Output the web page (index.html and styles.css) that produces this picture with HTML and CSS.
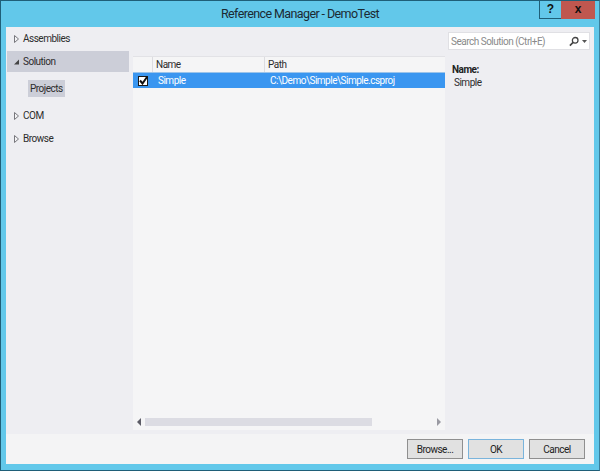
FILE: index.html
```html
<!DOCTYPE html>
<html lang="en">
<head>
<meta charset="utf-8">
<title>Reference Manager - DemoTest</title>
<link rel="stylesheet" href="styles.css">
</head>
<body>
<div class="window">
  <header class="titlebar">
    <h1 class="title">Reference Manager - DemoTest</h1>
    <div class="controls">
      <div class="ctl help">?</div>
      <div class="ctl close">x</div>
    </div>
  </header>
  <div class="client">
    <div class="content">
      <nav class="nav">
        <div class="nav-item"><svg class="arrow" width="5" height="8" viewBox="0 0 5 8"><path d="M.5.5v7L4.500 4z" fill="#f4f4f6" stroke="#77777d"/></svg><span>Assemblies</span></div>
        <div class="nav-item active"><svg class="arrow" width="5" height="8" viewBox="0 0 5 8"><path d="M0 6.500h5V1.500z" fill="#444"/></svg><span>Solution</span></div>
        <div class="sub"><span class="sub-item">Projects</span></div>
        <div class="nav-item"><svg class="arrow" width="5" height="8" viewBox="0 0 5 8"><path d="M.5.5v7L4.500 4z" fill="#f4f4f6" stroke="#77777d"/></svg><span>COM</span></div>
        <div class="nav-item"><svg class="arrow" width="5" height="8" viewBox="0 0 5 8"><path d="M.5.5v7L4.500 4z" fill="#f4f4f6" stroke="#77777d"/></svg><span>Browse</span></div>
      </nav>
      <main class="center">
        <div class="list">
          <div class="head">
            <div class="col-check"></div>
            <div class="col-name">Name</div>
            <div class="col-path">Path</div>
          </div>
          <div class="row">
            <div class="col-check"><span class="checkbox"><svg width="9" height="9" viewBox="0 0 9 9"><path d="M1 4.500l2.500 3L8 1" fill="none" stroke="#111" stroke-width="2"/></svg></span></div>
            <div class="col-name row-name">Simple</div>
            <div class="col-path row-path">C:\Demo\Simple\Simple.csproj</div>
          </div>
          <div class="list-fill"></div>
          <div class="hscroll">
            <svg width="4" height="8" viewBox="0 0 4 8"><path d="M4 0v8L0 4z" fill="#5c5c66"/></svg>
            <div class="track"><div class="thumb"></div></div>
            <svg width="4" height="8" viewBox="0 0 4 8"><path d="M0 0v8l4-4z" fill="#9a9aa2"/></svg>
          </div>
        </div>
      </main>
      <aside class="side">
        <div class="search">
          <span class="search-text">Search Solution (Ctrl+E)</span>
          <svg class="lens" width="10" height="11" viewBox="0 0 11 11"><circle cx="6.800" cy="4.200" r="3.100" fill="none" stroke="#444" stroke-width="1.400"/><path d="M4.500 6.500L1 10" stroke="#444" stroke-width="1.800"/></svg>
          <svg class="caret" width="5" height="3" viewBox="0 0 5 3"><path d="M0 0h5L2.500 3z" fill="#555"/></svg>
        </div>
        <div class="detail-label">Name:</div>
        <div class="detail-value">Simple</div>
      </aside>
    </div>
    <footer class="footer">
      <button class="btn">Browse...</button>
      <button class="btn default">OK</button>
      <button class="btn">Cancel</button>
    </footer>
  </div>
</div>
</body>
</html>
```
FILE: styles.css
```css
* { box-sizing: border-box; }
html, body { margin: 0; padding: 0; }
body {
  width: 600px;
  height: 471px;
  overflow: hidden;
  background: #fff;
  font-family: Roboto, "Liberation Sans", sans-serif;
  font-size: 10px;
  letter-spacing: -0.5px;
  color: #2c2c2c;
}
.window {
  width: 600px;
  height: 471px;
  display: flex;
  flex-direction: column;
  background: #62c8ea;
  border: 1px solid #1f5f78;
  border-right-color: #3a7f9c;
}
.titlebar {
  height: 26px;
  flex: none;
  display: flex;
  justify-content: center;
  position: relative;
  background: #62c8ea;
}
.title {
  margin: 0;
  font-size: 12.5px;
  font-weight: 400;
  letter-spacing: -0.6px;
  line-height: 26px;
  color: #1b2a33;
}
.controls {
  position: absolute;
  top: -1px;
  right: 4px;
  display: flex;
}
.ctl {
  height: 19px;
  display: flex;
  align-items: center;
  justify-content: center;
  font-family: "Liberation Sans", sans-serif;
  font-weight: 700;
  font-size: 12px;
  letter-spacing: 0;
  color: #111;
  padding-bottom: 2px;
}
.help {
  width: 22px;
  border: 1px solid #1f5f78;
  border-right: 0;
}
.close {
  width: 34px;
  background: #c0574f;
  border-top: 1px solid #1f5f78;
}
.client {
  flex: 1;
  margin: 0 5px 6px 5px;
  display: flex;
  flex-direction: column;
  background: #f4f4f5;
  min-height: 0;
}
.content {
  flex: 1;
  display: flex;
  min-height: 0;
  background: #eeeef2;
}
.nav {
  width: 127px;
  flex: none;
  padding: 0 4px 0 1px;
  display: flex;
  flex-direction: column;
}
.nav-item {
  height: 23px;
  display: flex;
  align-items: center;
  gap: 4px;
  padding-left: 7px;
}
.nav-item span { line-height: 20px; }
.active { height: 21px; margin: 1px 0; background: #ccced8; }
.arrow { flex: none; }
.sub {
  height: 31px;
  padding: 7px 0 0 21px;
}
.sub-item {
  display: inline-block;
  height: 17px;
  line-height: 17px;
  padding: 0 2px;
  background: #ccced8;
}
.center {
  width: 312px;
  flex: none;
  padding-top: 29px;
  display: flex;
}
.list {
  flex: 1;
  margin-bottom: 4px;
  background: #f5f5f6;
  border-top: 1px solid #e2e2e6;
  display: flex;
  flex-direction: column;
}
.head {
  height: 16px;
  display: flex;
  line-height: 15px;
  border-bottom: 1px solid #9cc4ea;
}
.head .col-check, .head .col-name { border-right: 1px solid #dcdce0; }
.col-check { width: 20px; flex: none; }
.col-name { width: 112px; flex: none; padding-left: 3px; }
.col-path { flex: 1; padding-left: 3px; }
.row {
  height: 15px;
  display: flex;
  align-items: center;
  background: #3a96f0;
  color: #fff;
  line-height: 15px;
}
.row .col-check { display: flex; justify-content: center; }
.row-name, .row-path { padding-left: 5px; }
.checkbox {
  width: 10px;
  height: 10px;
  background: #fff;
  display: flex;
  align-items: center;
  justify-content: center;
  border: 1px solid #1a1a1a;
}
.checkbox svg { flex: none; }
.list-fill { flex: 1; }
.hscroll {
  height: 13px;
  padding: 0 4px 3px 4px;
  display: flex;
  align-items: center;
  gap: 4px;
}
.track { flex: 1; height: 8px; }
.thumb { width: 227px; height: 8px; background: #dcdce3; }
.side {
  flex: 1;
  padding: 5px 4px 0 3px;
  display: flex;
  flex-direction: column;
}
.search {
  height: 18px;
  background: #fff;
  border: 1px solid #e0e0e4;
  display: flex;
  align-items: center;
  padding: 0 2px 0 2px;
  color: #8a8a8a;
}
.search-text { flex: 1; white-space: nowrap; }
.lens { margin-right: 3px; }
.detail-label {
  margin: 13px 0 0 4px;
  font-weight: 700;
  line-height: 13px;
  color: #222;
}
.detail-value {
  margin-left: 6px;
  line-height: 13px;
}
.footer {
  height: 30px;
  flex: none;
  display: flex;
  justify-content: flex-end;
  align-items: flex-start;
  gap: 5px;
  padding: 5px 9px 0 0;
  background: #f4f4f5;
}
.btn {
  width: 56px;
  height: 20px;
  padding: 0;
  font: inherit;
  letter-spacing: inherit;
  color: #222;
  background: #e1e1e1;
  border: 1px solid #8f8f8f;
}
.default { border-color: #7ab4dc; }
```
